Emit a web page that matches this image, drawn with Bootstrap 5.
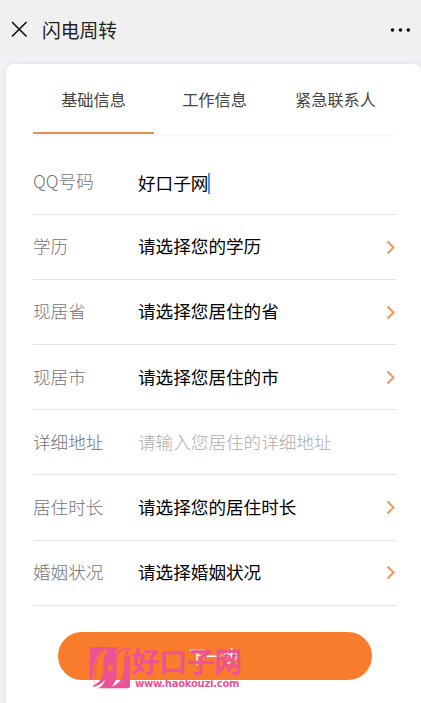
<!DOCTYPE html>
<html lang="zh-CN">
<head>
<meta charset="utf-8">
<meta name="viewport" content="width=device-width, initial-scale=1">
<title>闪电周转</title>
<link href="https://cdn.jsdelivr.net/npm/bootstrap@5.3.0/dist/css/bootstrap.min.css" rel="stylesheet">
<style>
body{font-family:"Noto Sans CJK SC",sans-serif;background:#f1f1f7;height:703px;overflow:hidden;color:#000}
.topbar{height:55px;background:#f0f0f0;padding:4px 10px 0 11px;box-shadow:0 1px 1px #eaeaf0}
.topbar h1{font-size:18.8px;line-height:28px;font-weight:400;color:#222;margin-left:14px}
.sheet{margin:9px 0 0 6px;height:639px;border-radius:8px 8px 0 0;box-shadow:0 0 6px #dedee2;padding:0 25px 0 27px}
.tabs{height:70px;box-shadow:0 4px 4px -2px #f4f4fa}
.tabs .nav-link{font-size:16.2px;line-height:24px;color:#444;padding:23px 0 0;border-radius:0;height:70px;white-space:nowrap}
.tabs .nav-link.active{border-bottom:2px solid #e88d50}
.fields{padding-top:16px}
.field{height:65.1px;border-bottom:1.5px solid #e3e3e3;font-size:17.6px;line-height:26px;white-space:nowrap}
.field label,.field span{padding-bottom:1.5px}
.field .entry{padding:1px 0 0}
.field label{width:105px;color:#747474;font-weight:300}
.caret{width:2px;height:21px;background:#4b96ec;margin-top:2px}
.hint{color:#adadad;font-weight:300}
.next{width:314px;height:48px;margin:26.5px 0 0 24.5px;background:#f97b2c;font-size:17px;line-height:24px}
.brand{left:89px;top:646px;color:#ec5295}
.brand-name{font-size:27.5px;line-height:28px;font-weight:500;-webkit-text-stroke:.5px #ec5295;height:32px;padding-left:1px}
.brand-url{font:bold 10px/12px "DejaVu Sans",sans-serif;letter-spacing:-.25px;padding-left:4px}
</style>
<script src="https://cdn.jsdelivr.net/npm/bootstrap@5.3.0/dist/js/bootstrap.bundle.min.js"></script>
</head>
<body>
<header class="topbar d-flex align-items-center">
<svg width="17" height="17" viewBox="0 0 17 17" fill="none" stroke="#111" stroke-width="1.6"><path d="M1 1 15.5 15.5M15.5 1 1 15.5"/></svg>
<h1 class="mb-0">闪电周转</h1>
<svg class="ms-auto" width="21" height="6" viewBox="0 0 21 6"><circle cx="2.5" cy="3" r="1.8"/><circle cx="10.5" cy="3" r="1.8"/><circle cx="18.3" cy="3" r="1.8"/></svg>
</header>
<main class="sheet bg-white">
<nav class="tabs nav nav-justified flex-nowrap">
<a class="nav-link active" href="#">基础信息</a><a class="nav-link" href="#">工作信息</a><a class="nav-link" href="#">紧急联系人</a>
</nav>
<form class="fields">
<div class="field d-flex align-items-center"><label>QQ号码</label><span class="entry">好口子网</span><i class="caret"></i></div>
<div class="field d-flex align-items-center"><label>学历</label><span>请选择您的学历</span><svg class="ms-auto" width="11" height="15" viewBox="0 0 11 15" fill="none" stroke="#f69558" stroke-width="2"><path d="m2.5 1.5 6 6-6 6"/></svg></div>
<div class="field d-flex align-items-center"><label>现居省</label><span>请选择您居住的省</span><svg class="ms-auto" width="11" height="15" viewBox="0 0 11 15" fill="none" stroke="#f69558" stroke-width="2"><path d="m2.5 1.5 6 6-6 6"/></svg></div>
<div class="field d-flex align-items-center"><label>现居市</label><span>请选择您居住的市</span><svg class="ms-auto" width="11" height="15" viewBox="0 0 11 15" fill="none" stroke="#f69558" stroke-width="2"><path d="m2.5 1.5 6 6-6 6"/></svg></div>
<div class="field d-flex align-items-center"><label>详细地址</label><span class="hint">请输入您居住的详细地址</span></div>
<div class="field d-flex align-items-center"><label>居住时长</label><span>请选择您的居住时长</span><svg class="ms-auto" width="11" height="15" viewBox="0 0 11 15" fill="none" stroke="#f69558" stroke-width="2"><path d="m2.5 1.5 6 6-6 6"/></svg></div>
<div class="field d-flex align-items-center"><label>婚姻状况</label><span>请选择婚姻状况</span><svg class="ms-auto" width="11" height="15" viewBox="0 0 11 15" fill="none" stroke="#f69558" stroke-width="2"><path d="m2.5 1.5 6 6-6 6"/></svg></div>
<button type="button" class="next btn rounded-pill border-0 text-white p-0">下一步</button>
</form>
</main>
<div class="brand position-absolute d-flex">
<svg width="42" height="43" viewBox="12 19 126 129">
<g fill="#ec5295">
<path d="M15 118V30Q15 22 25 22H80C54 26 36 38 29 67 25 84 25 106 20 120Z"/>
<path d="M135 50V138Q135 146 125 146H74C98 142 114 130 121 101 125 84 121 62 130 48Z"/>
<path fill-rule="evenodd" d="M80 22H98Q92 32 89 50C95 34 108 25 135 22 120 44 128 78 119 108 112 132 96 143 78 146H38C48 143 58 132 60 118 53 132 38 138 24 143 32 127 26 98 33 66 40 40 56 25 80 22ZM71 28C48 35 35 56 33 84 31 105 31 118 27 136 44 128 52 119 55 94 57 76 49 50 71 28ZM130 26C105 33 94 43 94 70 94 95 101 118 80 141 104 132 116 114 117 88 118 66 115 44 130 26ZM75 72 71 80 63 84 71 88 75 96 79 88 87 84 79 80Z"/>
</g>
<path fill="#f97b2c" d="m75 72 4 8 8 4-8 4-4 8-4-8-8-4 8-4Z"/></svg>
<div><div class="brand-name text-nowrap">好口子网</div><div class="brand-url">www.haokouzi.com</div></div>
</div>
</body>
</html>
